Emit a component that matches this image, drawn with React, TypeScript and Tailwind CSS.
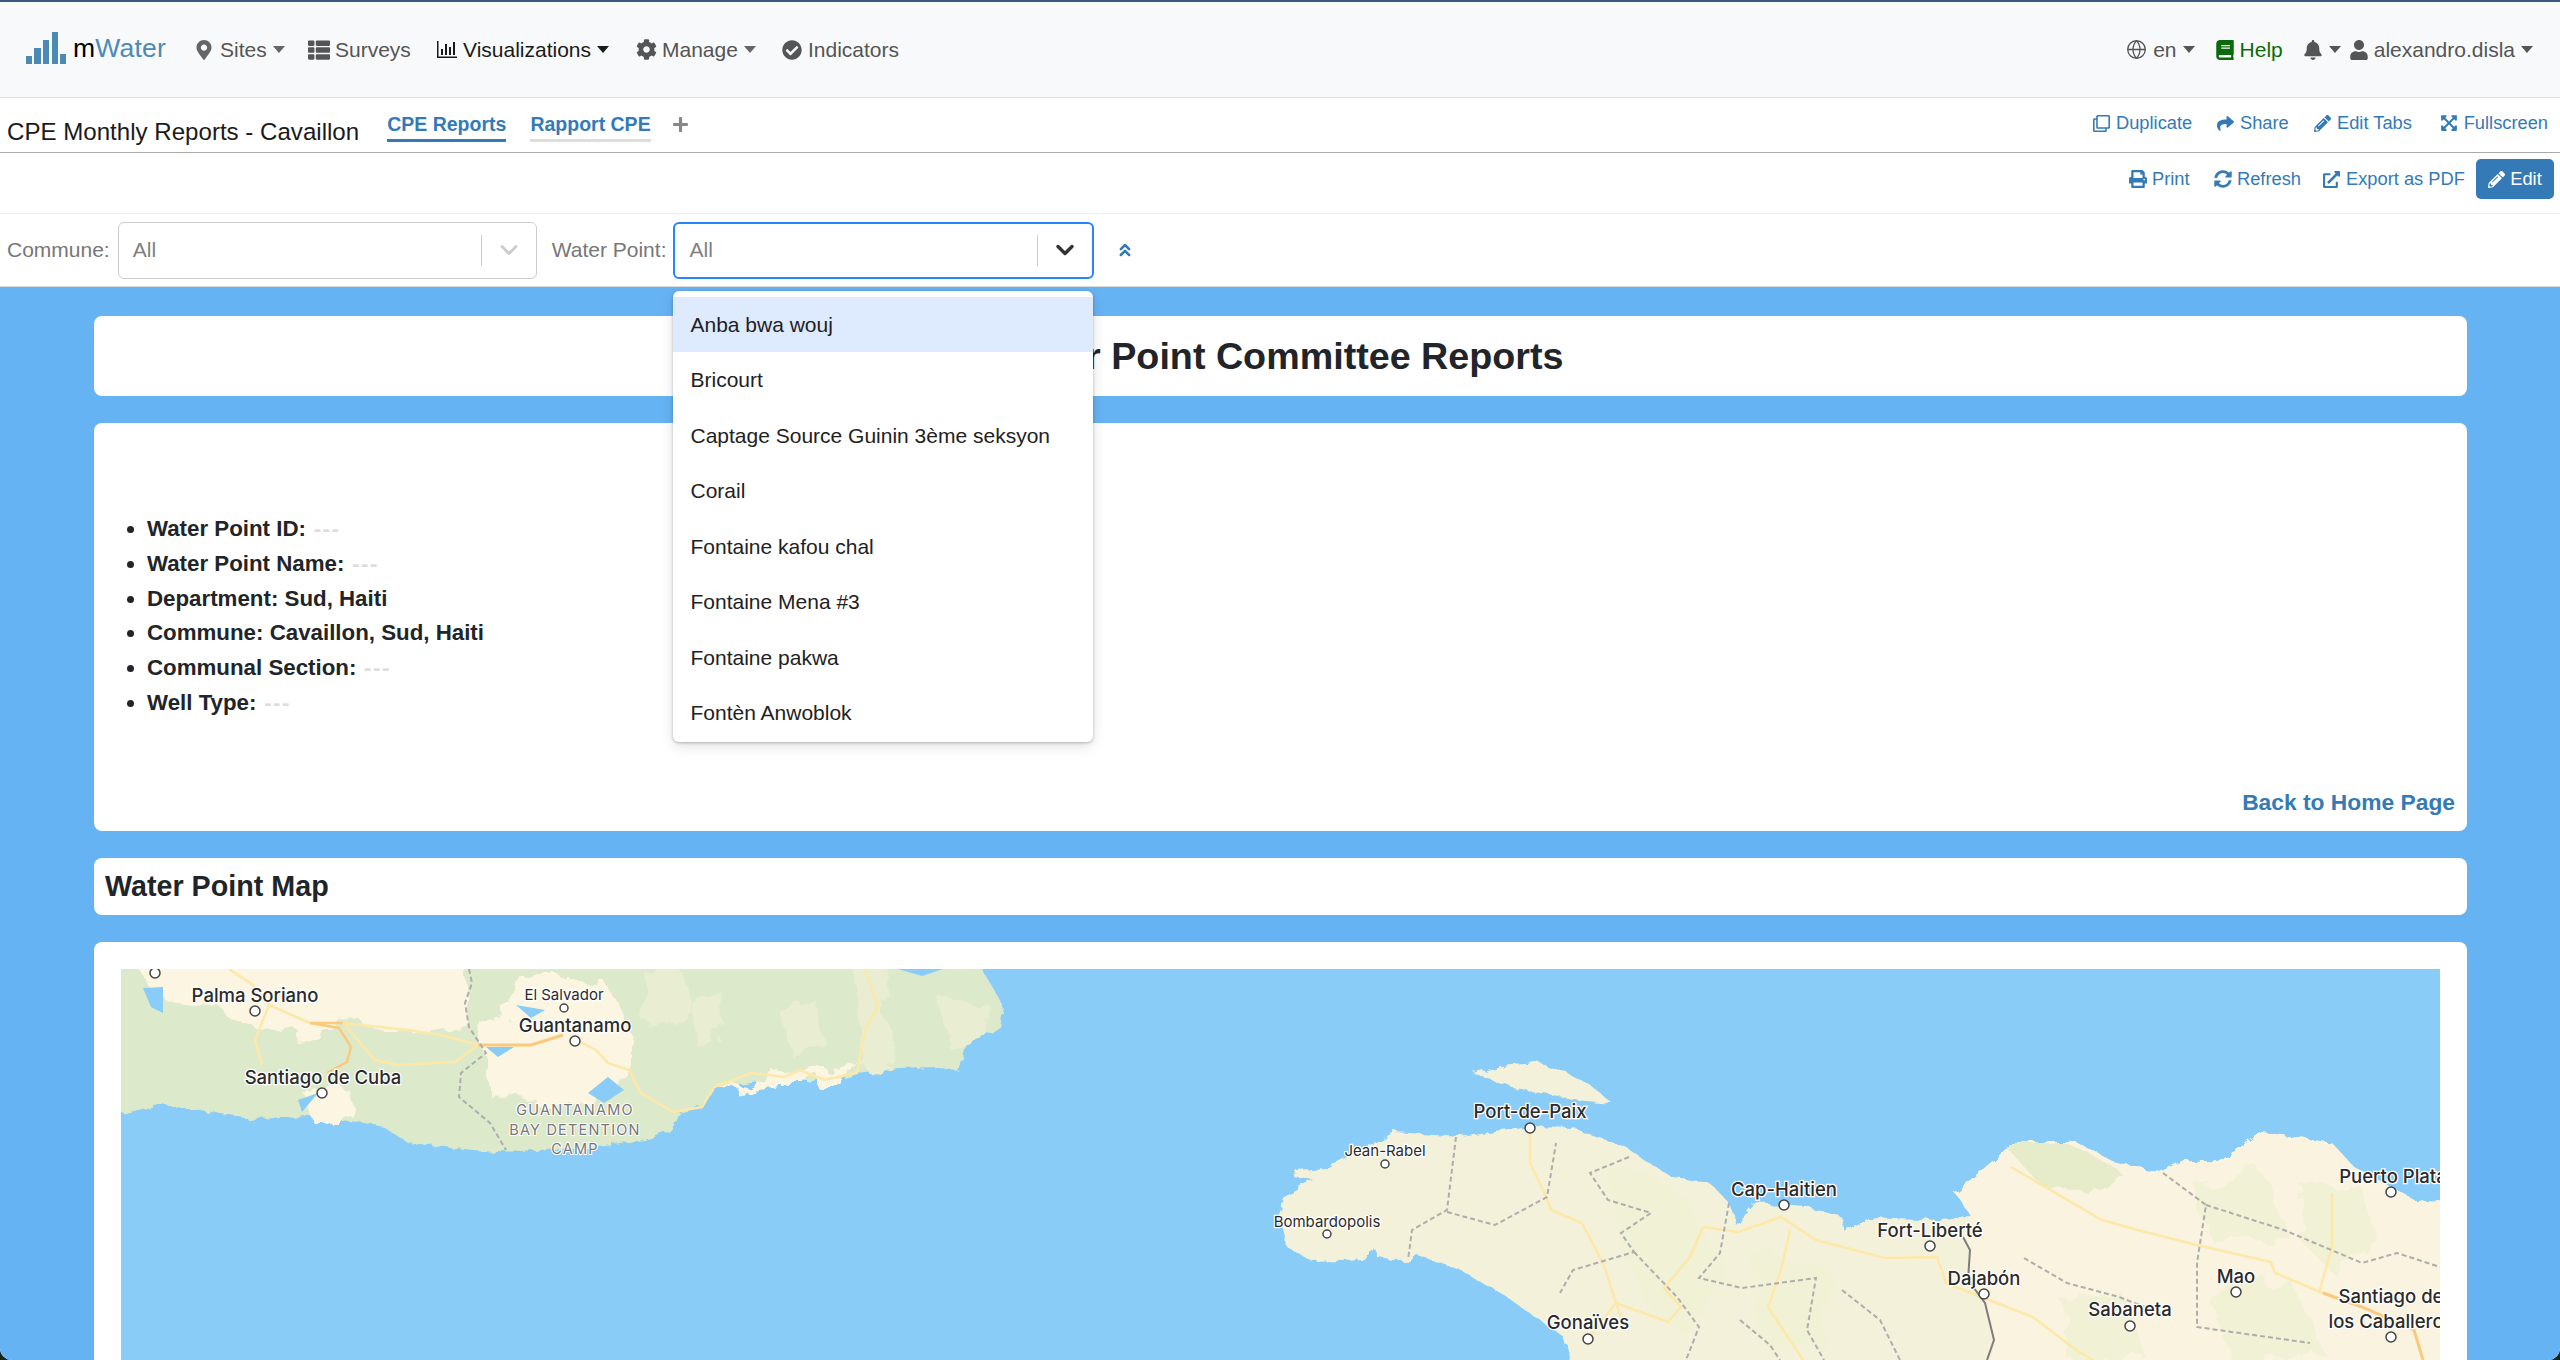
import {
  FaBell,
  FaBook,
  FaCheckCircle,
  FaCog,
  FaExpandArrowsAlt,
  FaExternalLinkAlt,
  FaMapMarkerAlt,
  FaPencilAlt,
  FaPlus,
  FaPrint,
  FaRegClone,
  FaShare,
  FaSyncAlt,
  FaThList,
  FaUser,
} from 'react-icons/fa';
import { ChevronDown, ChevronsUp, Globe } from 'lucide-react';

const Caret = ({ className = '' }: { className?: string }) => (
  <span className={`ml-[6px] inline-block border-x-[6px] border-t-[7px] border-x-transparent border-t-current ${className}`} />
);

const ChartIcon = () => (
  <svg width="20" height="17" viewBox="0 0 20 17" fill="currentColor">
    <rect x="0" y="0" width="1.5" height="17" />
    <rect x="0" y="15.5" width="20" height="1.5" />
    <rect x="4" y="8" width="2" height="6" />
    <rect x="8" y="3" width="2" height="11" />
    <rect x="12" y="6" width="2" height="8" />
    <rect x="16" y="1" width="2" height="13" />
  </svg>
);

const Logo = () => (
  <div className="flex items-end h-[32px] w-[166px] relative">
    <svg width="40" height="32" viewBox="0 0 40 32" fill="#4a8ab5">
      <rect x="0" y="24" width="6" height="8" />
      <rect x="8" y="16" width="7" height="16" />
      <rect x="17" y="8" width="6" height="24" />
      <rect x="26" y="0" width="6" height="32" />
      <rect x="34" y="22" width="6" height="10" />
    </svg>
    <span className="ml-[7px] text-[26.5px] leading-[31px] tracking-[0.2px] whitespace-nowrap">
      <span className="text-black">m</span>
      <span className="text-[#4a8ab5]">Water</span>
    </span>
  </div>
);

const NavItem = ({ icon, label, caret, active, width }: { icon: React.ReactNode; label: string; caret?: boolean; active?: boolean; width: string }) => (
  <div className={`flex items-center ${width} ${active ? 'text-[#1a1a1a]' : 'text-[#555]'}`}>
    <span className="flex items-center justify-center w-[22px] mr-[5px]">{icon}</span>
    <span>{label}</span>
    {caret && <Caret className={active ? '' : 'text-[#666]'} />}
  </div>
);

const ActionLink = ({ icon, label, width }: { icon: React.ReactNode; label: string; width: string }) => (
  <div className={`flex items-center text-[#337ab7] ${width}`}>
    <span className="flex items-center justify-center w-[19px] mr-[5px]">{icon}</span>
    <span>{label}</span>
  </div>
);

const Select = ({ width, focused }: { width: string; focused?: boolean }) => (
  <div
    className={`${width} h-[57px] bg-white rounded-[6px] flex items-center ${
      focused ? 'border-2 border-[#2684ff]' : 'border border-[#ccc]'
    }`}
  >
    <span className={`flex-1 text-[#808080] ${focused ? 'pl-[14px]' : 'pl-[14px]'}`}>All</span>
    <span className="w-px h-[31px] bg-[#ccc]" />
    <span className="w-[54px] flex justify-center">
      <ChevronDown size={28} strokeWidth={focused ? 3 : 2.5} className={focused ? 'text-[#333]' : 'text-[#ccc]'} />
    </span>
  </div>
);

const options = [
  'Anba bwa wouj',
  'Bricourt',
  'Captage Source Guinin 3ème seksyon',
  'Corail',
  'Fontaine kafou chal',
  'Fontaine Mena #3',
  'Fontaine pakwa',
  'Fontèn Anwoblok',
];

const details = [
  { label: 'Water Point ID:', empty: true },
  { label: 'Water Point Name:', empty: true },
  { label: 'Department: Sud, Haiti' },
  { label: 'Commune: Cavaillon, Sud, Haiti' },
  { label: 'Communal Section:', empty: true },
  { label: 'Well Type:', empty: true },
];

const places = [
  { name: 'Palma Soriano', x: 255, y: 1002, dx: 255, dy: 1011 },
  { name: 'Santiago de Cuba', x: 323, y: 1084, dx: 322, dy: 1093 },
  { name: 'Guantanamo', x: 575, y: 1032, dx: 575, dy: 1041 },
  { name: 'El Salvador', x: 564, y: 1000, dx: 564, dy: 1008, small: true },
  { name: 'Port-de-Paix', x: 1530, y: 1118, dx: 1530, dy: 1128 },
  { name: 'Jean-Rabel', x: 1385, y: 1156, dx: 1385, dy: 1164, small: true },
  { name: 'Bombardopolis', x: 1327, y: 1227, dx: 1327, dy: 1234, small: true },
  { name: 'Cap-Haitien', x: 1784, y: 1196, dx: 1784, dy: 1205 },
  { name: 'Fort-Liberté', x: 1930, y: 1237, dx: 1930, dy: 1246 },
  { name: 'Dajabón', x: 1984, y: 1285, dx: 1984, dy: 1294 },
  { name: 'Mao', x: 2236, y: 1283, dx: 2236, dy: 1292 },
  { name: 'Sabaneta', x: 2130, y: 1316, dx: 2130, dy: 1326 },
  { name: 'Gonaïves', x: 1588, y: 1329, dx: 1588, dy: 1339 },
  { name: 'Puerto Plata', x: 2393, y: 1183, dx: 2391, dy: 1192 },
  { name: 'Santiago de', x: 2391, y: 1303 },
  { name: 'los Caballeros', x: 2391, y: 1328, dx: 2391, dy: 1337 },
];

const borders = [
  'M1456 1137L1447 1210L1412 1230L1408 1260',
  'M1447 1212L1495 1225L1547 1197L1556 1143',
  'M1629 1157L1590 1173L1608 1200L1651 1213L1621 1233L1634 1252L1573 1270L1560 1293',
  'M1634 1252L1677 1297L1699 1327L1686 1360',
  'M1729 1203L1720 1253L1699 1278L1742 1288L1816 1278L1807 1330L1824 1360',
  'M2163 1173L2206 1205L2197 1263L2197 1327L2310 1343',
  'M2206 1205L2284 1230L2362 1263L2397 1253L2440 1267',
  'M2024 1258L2067 1283L2119 1297L2171 1317',
  'M1842 1290L1880 1320L1900 1360',
  'M1740 1320L1770 1345L1780 1360',
  'M469 969L472 983L465 1003L469 1027L486 1053L461 1073L459 1097L490 1123L506 1150',
];

const roads = [
  'M1530 1130L1530 1163L1543 1190L1551 1210L1582 1223L1603 1263L1625 1330',
  'M1703 1227L1738 1232L1781 1217L1816 1240L1885 1258L1937 1257L1946 1283L1981 1297L2033 1317L2076 1350L2093 1360',
  'M2011 1167L2102 1220L2145 1232L2197 1245L2271 1262L2275 1273L2323 1293',
  'M2332 1193L2332 1247L2319 1293',
  'M1703 1227L1690 1257L1664 1288L1681 1307L1668 1322L1616 1303L1588 1339',
  'M1790 1230L1781 1270L1768 1307L1803 1360',
  'M229 969L253 985L269 1005L310 1023',
  'M343 1023L408 1030L441 1035L478 1045',
  'M576 1040L596 1050L608 1063L629 1070L641 1093L673 1112L702 1107L714 1087L751 1073L784 1077L800 1070L824 1080L857 1073L865 1030L878 1007L865 969',
  'M269 1005L255 1040L262 1065',
  'M343 1023L375 1060L398 1065L455 1062L478 1045',
];

const creamCuba = [
  'M131 950L465 950L469 1027L408 1030L343 1027L286 1037L237 1017L155 997Z',
  'M490 1063L482 1030L506 1007L522 980L604 980L629 1020L629 1070L620 1093L571 1103L490 1097Z',
  'M720 1090L760 1072L830 1072L858 1060L838 1082L775 1082Z',
  'M300 1090L345 1085L352 1105L312 1122Z',
];

const softCuba = [
  'M690 1000L720 990L730 1030L700 1050Z',
  'M780 1010L815 1000L830 1050L795 1060Z',
  'M850 960L885 960L890 1060L862 1068Z',
  'M940 1000L995 1010L985 1035L950 1050Z',
  'M645 970L680 965L690 1010L650 1030Z',
];

const greensHaiti = [
  'M1600 1160L1680 1190L1720 1260L1690 1340L1640 1300Z',
  'M1760 1250L1830 1270L1820 1350L1760 1340Z',
  'M2300 1180L2354 1180L2380 1240L2340 1280L2300 1240Z',
  'M2190 1180L2260 1170L2290 1240L2210 1240Z',
  'M2210 1290L2290 1280L2330 1360L2230 1360Z',
  'M2060 1300L2120 1290L2150 1360L2070 1360Z',
];

const MapView = () => (
  <svg className="block w-[2319px] h-[391px]" viewBox="121 969 2319 391">
    <defs>
      <filter id="coast" x="-5%" y="-5%" width="110%" height="110%">
        <feTurbulence type="fractalNoise" baseFrequency="0.09" numOctaves="3" seed="4" />
        <feDisplacementMap in="SourceGraphic" scale="9" />
      </filter>
      <filter id="patch" x="-10%" y="-10%" width="120%" height="120%">
        <feTurbulence type="fractalNoise" baseFrequency="0.03" numOctaves="4" seed="9" />
        <feDisplacementMap in="SourceGraphic" scale="34" />
      </filter>
    </defs>
    <rect x="121" y="969" width="2319" height="391" fill="#88ccf7" />
    {/* Cuba */}
    <g filter="url(#coast)">
      <path
        d="M90 950L970 950L1004 1007L1000 1027L967 1043L959 1072L939 1067L898 1068L857 1073L833 1080L775 1080L714 1088L702 1107L678 1113L673 1130L645 1140L588 1147L522 1152L473 1150L408 1143L384 1127L359 1122L310 1117L245 1119L212 1112L163 1104L121 1114L90 1120Z"
        fill="#dde9cb"
      />
    </g>
    <g filter="url(#patch)" fill="#fbf5e1">
      {creamCuba.map(d => (
        <path key={d} d={d} />
      ))}
    </g>
    <g filter="url(#patch)" fill="#e9eed3">
      {softCuba.map(d => (
        <path key={d} d={d} />
      ))}
    </g>
    <path d="M608 1077L624 1090L604 1103L588 1093Z" fill="#88ccf7" />
    <path d="M318 1093L302 1112L298 1100Z" fill="#88ccf7" />
    <path d="M143 988L163 987L163 1013L151 1007Z" fill="#88ccf7" />
    <path d="M516 1005L545 1010L531 1018Z" fill="#88ccf7" />
    <path d="M486 1047L514 1047L498 1057Z" fill="#88ccf7" />
    <path d="M898 969L943 969L922 976Z" fill="#88ccf7" />
    <path d="M343 1023L310 1023L339 1028L351 1047L347 1062L327 1073" fill="none" stroke="#fbc97c" strokeWidth="2.5" />
    <path d="M478 1045L531 1045L563 1035" fill="none" stroke="#fbc97c" strokeWidth="3" />
    {/* Hispaniola */}
    <g filter="url(#coast)">
      <path d="M1474 1074L1500 1066L1538 1063L1565 1072L1590 1085L1612 1103L1573 1100L1512 1087Z" fill="#f4f1da" />
      <path
        d="M1577 1380L1564 1337L1504 1295L1460 1270L1417 1255L1408 1262L1378 1258L1373 1247L1365 1260L1313 1262L1287 1247L1278 1213L1287 1192L1313 1180L1293 1177L1295 1170L1326 1168L1395 1132L1460 1137L1530 1127L1573 1128L1625 1147L1668 1175L1712 1185L1729 1203L1738 1227L1755 1203L1807 1207L1842 1217L1846 1233L1868 1218L1920 1220L1972 1217L1955 1193L2002 1153L2020 1142L2076 1142L2111 1160L2158 1173L2184 1160L2219 1162L2262 1132L2332 1143L2354 1167L2414 1200L2470 1205L2470 1380Z"
        fill="#f4f1da"
      />
      <path
        d="M1963 1237L1972 1217L1955 1193L2002 1153L2020 1142L2076 1142L2111 1160L2158 1173L2184 1160L2219 1162L2262 1132L2332 1143L2354 1167L2414 1200L2470 1205L2470 1380L1987 1380L1994 1340L1985 1303L1968 1280L1970 1250Z"
        fill="#faf3df"
      />
    </g>
    <g filter="url(#patch)">
      <path d="M2007 1148L2076 1148L2119 1170L2085 1190L2033 1177Z" fill="#e6ecca" />
      {greensHaiti.map(d => (
        <path key={d} d={d} fill="#f1f1d5" />
      ))}
    </g>
    {roads.map(d => (
      <path key={d} d={d} fill="none" stroke="#fde8a8" strokeWidth="2.5" />
    ))}
    <path d="M2323 1293L2362 1307L2414 1330L2423 1360" fill="none" stroke="#fbc97c" strokeWidth="3" />
    {borders.map(d => (
      <path key={d} d={d} fill="none" stroke="#adadad" strokeWidth="2" strokeDasharray="5 3" />
    ))}
    <path d="M1963 1237L1970 1250L1968 1280L1985 1303L1994 1340L1987 1360" fill="none" stroke="#7d7d7d" strokeWidth="2" />
    {places.map(p => (
      <g key={p.name}>
        {p.dx && <circle cx={p.dx} cy={p.dy} r={p.small ? 4 : 5} fill="white" stroke="#444" strokeWidth="1.5" />}
        <text
          x={p.x}
          y={p.y}
          textAnchor="middle"
          fontFamily="Inter, sans-serif"
          fontSize={p.small ? 15 : 18.5}
          fontWeight={p.small ? 400 : 500}
          fill="#2b2b2b"
          stroke="white"
          strokeWidth="2.5"
          paintOrder="stroke"
        >
          {p.name}
        </text>
      </g>
    ))}
    <circle cx="155" cy="973" r="5" fill="white" stroke="#444" strokeWidth="1.5" />
    {[
      { t: 'GUANTANAMO', y: 1115 },
      { t: 'BAY DETENTION', y: 1135 },
      { t: 'CAMP', y: 1154 },
    ].map(l => (
      <text
        key={l.t}
        x="575"
        y={l.y}
        textAnchor="middle"
        fontFamily="Inter, sans-serif"
        fontSize="14.5"
        letterSpacing="1.2"
        fill="#777"
        stroke="white"
        strokeWidth="2"
        paintOrder="stroke"
      >
        {l.t}
      </text>
    ))}
  </svg>
);

export default function App() {
  return (
    <div className="bg-[#16241c] h-[1360px] overflow-hidden font-['Liberation_Sans',sans-serif] text-[21px]">
      <div className="h-full flex flex-col rounded-b-[12px] overflow-hidden bg-white border-t-2 border-[#3b5a80]">
        <nav className="h-[96px] shrink-0 bg-[#f8f9fa] border-b border-[#e0e0e6] flex items-center justify-between pl-[26px] pr-[27px]">
          <div className="flex items-center">
            <div className="w-[167px] -mt-[4px]">
              <Logo />
            </div>
            <NavItem width="w-[115px]" icon={<FaMapMarkerAlt size={20} className="text-[#666]" />} label="Sites" caret />
            <NavItem width="w-[128px]" icon={<FaThList size={22} className="text-[#555]" />} label="Surveys" />
            <NavItem width="w-[199px]" icon={<ChartIcon />} label="Visualizations" caret active />
            <NavItem width="w-[146px]" icon={<FaCog size={21} className="text-[#555]" />} label="Manage" caret />
            <NavItem width="w-[120px]" icon={<FaCheckCircle size={20} className="text-[#555]" />} label="Indicators" />
          </div>
          <div className="flex items-center text-[#555]">
            <Globe size={21} strokeWidth={1.5} className="mr-[6px]" />
            <span>en</span>
            <Caret className="mr-[20px]" />
            <FaBook size={20} className="text-[#0a6b0a] mr-[5px]" />
            <span className="text-[#0a6b0a] mr-[20px]">Help</span>
            <FaBell size={20} />
            <Caret className="mr-[8px]" />
            <FaUser size={20} className="mr-[5px]" />
            <span>alexandro.disla</span>
            <Caret />
          </div>
        </nav>

        <div className="h-[55px] shrink-0 border-b border-[#aaa] flex items-center justify-between pl-[7px] pr-[12px]">
          <div className="flex items-center">
            <h1 className="text-[24.1px] text-[#1a1a1a] mt-[14px] mr-[28px] whitespace-nowrap">CPE Monthly Reports - Cavaillon</h1>
            <div className="text-[19.5px] font-bold text-[#337ab7] border-b-[3px] border-[#337ab7] h-[31px] mt-[4px] leading-[27px] mr-[24px]">CPE Reports</div>
            <div className="text-[19.5px] font-bold text-[#337ab7] border-b-[3px] border-[#ddd] h-[31px] mt-[4px] leading-[27px] mr-[21px]">Rapport CPE</div>
            <FaPlus size={17} className="text-[#888]" />
          </div>
          <div className="flex items-center text-[18.3px] pb-[4px]">
            <ActionLink width="w-[124px]" icon={<FaRegClone size={17} />} label="Duplicate" />
            <ActionLink width="w-[97px]" icon={<FaShare size={17} />} label="Share" />
            <ActionLink width="w-[127px]" icon={<FaPencilAlt size={17} />} label="Edit Tabs" />
            <ActionLink width="w-[108px]" icon={<FaExpandArrowsAlt size={18} />} label="Fullscreen" />
          </div>
        </div>

        <div className="h-[61px] shrink-0 border-b border-[#eee] flex items-center justify-end pr-[6px] pb-[8px] text-[18.3px]">
          <ActionLink width="w-[85px]" icon={<FaPrint size={18} />} label="Print" />
          <ActionLink width="w-[109px]" icon={<FaSyncAlt size={18} />} label="Refresh" />
          <ActionLink width="w-[154px]" icon={<FaExternalLinkAlt size={17} />} label="Export as PDF" />
          <div className="w-[78px] h-[40px] rounded-[5px] bg-[#337ab7] text-white flex items-center justify-center gap-[5px]">
            <FaPencilAlt size={17} />
            <span>Edit</span>
          </div>
        </div>

        <div className="h-[73px] shrink-0 border-b border-[#ddd] flex items-center pl-[7px]">
          <span className="text-[#777] mr-[8px]">Commune:</span>
          <Select width="w-[419px]" />
          <span className="text-[#777] ml-[15px] mr-[7px]">Water Point:</span>
          <div className="relative">
            <Select width="w-[421px]" focused />
            <div className="absolute left-0 top-[69px] w-[420px] h-[451px] pt-[6px] bg-white rounded-[6px] shadow-[0_1px_3px_rgba(0,0,0,0.25),0_4px_14px_rgba(0,0,0,0.12)] z-10 text-[21px] text-[#222]">
              {options.map((o, i) => (
                <div key={o} className={`h-[55.5px] flex items-center pl-[17px] ${i === 0 ? 'bg-[#deebff]' : ''}`}>
                  {o}
                </div>
              ))}
            </div>
          </div>
          <ChevronsUp size={20} strokeWidth={3} className="text-[#337ab7] ml-[21px]" />
        </div>

        <main className="flex-1 min-h-0 overflow-hidden bg-[#66b3f4] pl-[94px] pr-[93px] pt-[29px] flex flex-col gap-[27px] text-[#212529]">
          <div className="h-[80px] shrink-0 bg-white rounded-[8px] flex items-center justify-center">
            <h2 className="text-[37.7px] font-bold">Water Point Committee Reports</h2>
          </div>

          <div className="h-[408px] shrink-0 bg-white rounded-[8px] pt-[89px] pr-[12px] flex flex-col">
            <ul className="list-disc pl-[53px] text-[22.3px] font-bold leading-[34.8px]">
              {details.map(d => (
                <li key={d.label}>
                  {d.label}
                  {d.empty && <span className="text-[#ddd] tracking-[1.5px]"> ---</span>}
                </li>
              ))}
            </ul>
            <div className="mt-[64px] text-right text-[22.8px] font-bold text-[#337ab7]">Back to Home Page</div>
          </div>

          <div className="h-[57px] shrink-0 bg-white rounded-[8px] flex items-center pl-[11px]">
            <h3 className="text-[28.7px] font-bold">Water Point Map</h3>
          </div>

          <div className="shrink-0 bg-white rounded-t-[8px] pt-[27px] px-[27px]">
            <MapView />
          </div>
        </main>
      </div>
    </div>
  );
}
